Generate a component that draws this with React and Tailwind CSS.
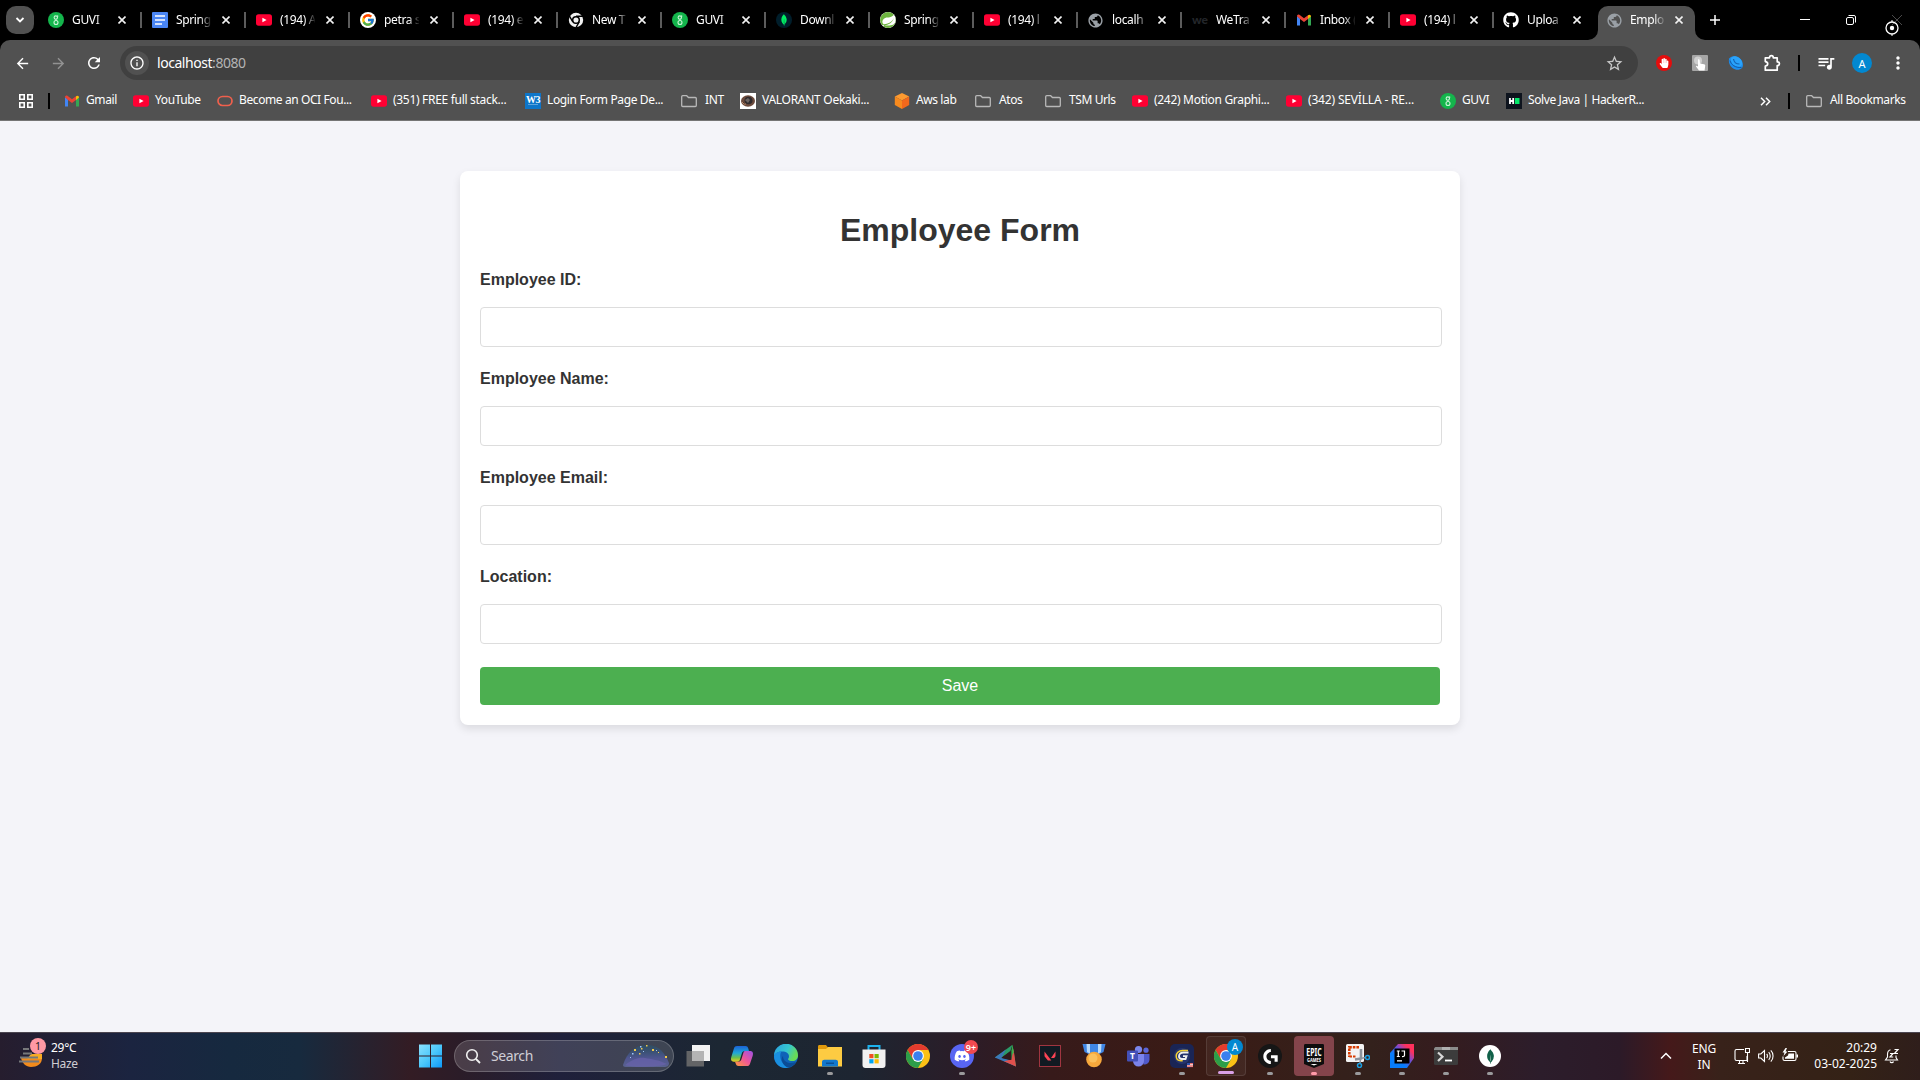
import React from "react";
import {
  MdArrowBack,
  MdArrowForward,
  MdRefresh,
  MdStarBorder,
  MdQueueMusic,
  MdMoreVert,
  MdInfoOutline,
  MdPublic,
} from "react-icons/md";
import { FcGoogle } from "react-icons/fc";
import { FaGithub, FaDiscord, FaHandPaper } from "react-icons/fa";
import { SiMongodb, SiSpring, SiLogitechg } from "react-icons/si";

/* ---------- favicons ---------- */

const Guvi = () => (
  <svg viewBox="0 0 16 16" className="size-4 shrink-0">
    <circle cx="8" cy="8" r="8" fill="#14b54c" />
    <g fill="none" stroke="#c9f5d6" strokeWidth="1.100">
      <circle cx="7.800" cy="5.600" r="1.700" />
      <circle cx="8" cy="10.500" r="2" />
      <path d="M9 4.500l1.200-.8M8 7.300v1.200" />
    </g>
  </svg>
);

const YouTube = () => (
  <svg viewBox="0 0 16 16" className="size-4 shrink-0">
    <rect y="2.300" width="16" height="11.400" rx="2.600" fill="#ff0033" />
    <path d="M6.400 5.700v4.600L10.600 8z" fill="#fff" />
  </svg>
);

const Docs = () => (
  <svg viewBox="0 0 16 16" className="size-4 shrink-0">
    <rect width="16" height="16" rx="1" fill="#4a86f5" />
    <path d="M3 4h10M3 8h10M3 12h7" stroke="#fff" strokeWidth="1.700" />
  </svg>
);

const Gmail = () => (
  <svg viewBox="0 0 16 16" className="size-4 shrink-0">
    <path d="M1 4v9.500h3V6.500z" fill="#4285f4" />
    <path d="M15 4v9.500h-3V6.500z" fill="#34a853" />
    <path d="M1 4.300 4 7l4 3 4-3V3.200L8 6.300 3.400 2.800C2.200 2 1 2.800 1 4.300z" fill="#ea4335" />
    <path d="M12 3.200v3.900l3-2.500c0-1.800-1.500-2.500-3-1.400z" fill="#fbbc04" />
  </svg>
);

const ChromeMono = () => (
  <svg viewBox="0 0 16 16" className="size-4 shrink-0">
    <circle cx="8" cy="8" r="7.200" fill="#f1f1f1" />
    <circle cx="8" cy="8" r="3.300" fill="#f1f1f1" stroke="#000" strokeWidth="1.500" />
    <path d="M8 4.300h7M4.800 9.900 1.300 3.900M11.200 9.900 7.700 16" stroke="#000" strokeWidth="1.400" />
  </svg>
);

const Mongo = () => (
  <span className="flex size-4 shrink-0 items-center justify-center rounded-full bg-[#001e2b]">
    <SiMongodb size={12} color="#00ed64" />
  </span>
);

const Spring = () => <SiSpring size={16} color="#6db33f" className="shrink-0 rounded-full bg-white" />;

const Globe = () => <MdPublic size={17} color="#9aa0a6" className="-ml-px shrink-0" />;

const WeMark = () => (
  <span className="w-4 shrink-0 text-center font-['Lato'] text-[12px] leading-none font-black text-[#23262a]">we</span>
);

const Git = () => <FaGithub size={16} color="#fff" className="-ml-px shrink-0" />;

const GoogleG = () => (
  <span className="flex size-4 shrink-0 items-center justify-center rounded-full bg-white">
    <FcGoogle size={14} />
  </span>
);

const Oracle = () => (
  <svg viewBox="0 0 16 16" className="size-4 shrink-0">
    <rect x="1" y="3.500" width="14" height="9" rx="4.500" fill="none" stroke="#f0604d" strokeWidth="1.700" />
  </svg>
);

const W3 = () => (
  <span className="flex size-4 shrink-0 flex-col items-center bg-[#0e76c9] font-['Liberation_Serif'] text-[10px] leading-[13px] font-bold tracking-[-0.5px] text-white">
    W3
    <span className="-mt-0.5 h-px w-2.5 bg-[#5da4dd]" />
  </span>
);

const Folder = () => (
  <svg viewBox="0 0 16 16" className="mr-0.5 size-4 shrink-0">
    <path d="M1.700 2.700h4l1.800 1.800h6.800c.6 0 1 .4 1 1v7c0 .6-.4 1-1 1H1.700c-.6 0-1-.4-1-1v-8.800c0-.6.4-1 1-1z" fill="none" stroke="#b8b8b8" strokeWidth="1.300" />
  </svg>
);

const Oekaki = () => (
  <svg viewBox="0 0 16 16" className="size-4 shrink-0">
    <path d="M0 0h16v16H0z" fill="#fff" />
    <ellipse cx="8" cy="8" rx="7" ry="5.800" fill="#6b4a3c" />
    <ellipse cx="8.500" cy="7.500" rx="4" ry="3.800" fill="#2f2a2c" />
    <path d="M5 7l3-2 2 2-2 3z" fill="#6d6562" />
    <path d="M2 9l2 2 2 0" stroke="#b98a6a" />
  </svg>
);

const Aws = () => (
  <svg viewBox="0 0 16 16" className="size-4 shrink-0">
    <path d="M8 0l7.200 3.500L8 7.500.8 3.500z" fill="#fd9a30" />
    <path d="M.8 3.500 8 7.500V16L.8 12z" fill="#f78a1e" />
    <path d="M15.200 3.500 8 7.500V16l7.200-4z" fill="#f2681c" />
  </svg>
);

const Hacker = () => (
  <svg viewBox="0 0 16 16" className="size-4 shrink-0">
    <path d="M0 0h16v16H0z" fill="#0e141e" />
    <path d="M4 5v6M7.200 5v6M3.500 8h4" stroke="#fff" strokeWidth="1.800" />
    <path d="M9 5h4.500v6H9z" fill="#05e86a" />
  </svg>
);

/* ---------- tab strip ---------- */

const tabs = [
  [Guvi, "GUVI"],
  [Docs, "Spring"],
  [YouTube, "(194) A"],
  [GoogleG, "petra s"],
  [YouTube, "(194) e"],
  [ChromeMono, "New T"],
  [Guvi, "GUVI"],
  [Mongo, "Downl"],
  [Spring, "Spring"],
  [YouTube, "(194) l"],
  [Globe, "localh"],
  [WeMark, "WeTra"],
  [Gmail, "Inbox ("],
  [YouTube, "(194) l"],
  [Git, "Uploa"],
];

const Cross = () => (
  <svg viewBox="0 0 8 8" className="size-2 shrink-0">
    <path d="M.5.5l7 7M7.500.5l-7 7" stroke="#f2f2f2" strokeWidth="1.600" />
  </svg>
);

const TabBody = ({ Icon, label }) => (
  <>
    <Icon />
    <span className="ml-2 w-[35px] text-[12px] leading-4 tracking-[-0.35px] whitespace-nowrap text-white [mask-image:linear-gradient(to_right,#000_24px,transparent_36px)]">
      {label}
    </span>
    <span className="ml-[11px]">
      <Cross />
    </span>
  </>
);

const TabStrip = () => (
  <div className="flex h-10 items-start bg-black">
    <div className="mt-1.5 ml-1.5 flex size-7 items-center justify-center rounded-[10px] bg-[#515151]">
      <svg viewBox="0 0 10 8" className="h-2 w-2.5">
        <path d="M1.500 2l3.500 3.500L8.500 2" fill="none" stroke="#fff" strokeWidth="1.800" />
      </svg>
    </div>
    <div className="ml-3.5 flex h-10 items-center">
      {tabs.map(([Icon, label], i) => (
        <div key={i} className="flex h-10 w-[104px] items-center">
          <TabBody Icon={Icon} label={label} />
          {i < 14 && <span className="ml-3.5 h-4 w-[1.500px] bg-[#5c5c5c]" />}
        </div>
      ))}
    </div>
    <div className="relative mt-1.5 -ml-2.5 flex h-[34px] w-[97px] items-center rounded-t-[10px] bg-[#515151] pb-1.5 pl-[9px]">
      <svg viewBox="0 0 10 10" className="absolute bottom-0 -left-2.5 size-2.5">
        <path d="M10 0v10H0A10 10 0 0 0 10 0z" fill="#515151" />
      </svg>
      <svg viewBox="0 0 10 10" className="absolute -right-2.5 bottom-0 size-2.5">
        <path d="M0 0v10h10A10 10 0 0 1 0 0z" fill="#515151" />
      </svg>
      <Globe />
      <span className="ml-[7px] w-[35px] text-[12px] leading-4 tracking-[-0.35px] whitespace-nowrap text-white [mask-image:linear-gradient(to_right,#000_24px,transparent_36px)]">
        Emplo
      </span>
      <span className="ml-2.5">
        <Cross />
      </span>
    </div>
    <div className="flex h-10 flex-1 items-center pl-[15px]">
      <svg viewBox="0 0 10 10" className="size-2.5">
        <path d="M5 0v10M0 5h10" stroke="#fff" strokeWidth="1.500" />
      </svg>
      <svg viewBox="0 0 10 10" className="ml-[80px] size-2.5">
        <path d="M0 4.500h10" stroke="#fff" />
      </svg>
      <svg viewBox="0 0 10 10" className="ml-9 size-2.5 overflow-visible">
        <rect x=".5" y="2.500" width="7" height="7" rx="1.500" fill="none" stroke="#fff" />
        <path d="M2.500.5H8A1.500 1.500 0 0 1 9.500 2v5.500" fill="none" stroke="#fff" />
      </svg>
      <div className="relative ml-9 size-2.5">
        <svg viewBox="0 0 10 10" className="size-2.5">
          <path d="M0 0l10 10M10 0L0 10" stroke="#4a4a4a" />
        </svg>
        <svg viewBox="0 0 16 16" className="absolute top-[5px] -left-2 size-4">
          <circle cx="8" cy="8" r="6" fill="none" stroke="#fff" strokeWidth="1.300" />
          <circle cx="8" cy="8" r="2.200" fill="#fff" />
          <path d="M8 0v2M8 14v2" stroke="#fff" />
        </svg>
      </div>
    </div>
  </div>
);

/* ---------- toolbar ---------- */

const Slot = ({ children }) => <div className="flex w-9 shrink-0 items-center justify-center">{children}</div>;

const Toolbar = () => (
  <div className="flex h-[46px] items-center pl-1">
    <Slot>
      <MdArrowBack size={17} color="#fff" />
    </Slot>
    <Slot>
      <MdArrowForward size={17} color="#929292" />
    </Slot>
    <Slot>
      <MdRefresh size={18} color="#fff" />
    </Slot>
    <div className="ml-2 flex h-[34px] w-[1518px] items-center rounded-full bg-[#404040] pr-3.5 pl-[5px]">
      <div className="flex size-6 items-center justify-center rounded-full bg-[#515151]">
        <MdInfoOutline size={16} color="#fff" />
      </div>
      <span className="ml-2 flex-1 pb-px text-[14px] tracking-[-0.45px] text-white">
        localhost<span className="text-[#b4b4b4]">:8080</span>
      </span>
      <MdStarBorder size={19} color="#c6c6c6" />
    </div>
    <div className="ml-2 flex items-center">
      <Slot>
        <span className="flex size-4 items-center justify-center rounded-full bg-[#e40d0d]">
          <FaHandPaper size={10} color="#fff" />
        </span>
      </Slot>
      <Slot>
        <svg viewBox="0 0 16 16" className="size-4">
          <rect width="16" height="16" rx="1" fill="#a6a6a6" />
          <circle cx="6" cy="5.500" r="4" fill="#cfcfcf" />
          <path d="M6 4.500c1-.6 1.600 0 1.700.8L8 8.500l4 .8c1 .2 1.300.8 1.200 1.500l-.6 4.700H7L4 11.500c-.3-.9.6-1.300 2 0z" fill="#fff" />
        </svg>
      </Slot>
      <Slot>
        <svg viewBox="0 0 16 16" className="size-4">
          <path d="M1.200 3.500C3.500.8 8 .5 11.500 3.200c3.500 2.800 4.300 7 2.500 9.800-2.500 2.500-6.500 2.300-9.500 0C1.500 10.500.2 6.500 1.200 3.500z" fill="#1c8ff0" />
          <ellipse cx="8.500" cy="6.500" rx="6.300" ry="4.500" transform="rotate(40 8.500 6.500)" fill="#2aa3fb" />
          <path d="M2 5.500c1 4 5 7.500 11.500 7" fill="none" stroke="#14559c" strokeWidth=".9" />
          <path d="M5.500 4c.5 3 3 5 6 5" fill="none" stroke="#1464b4" strokeWidth="1.200" />
        </svg>
      </Slot>
      <Slot>
        <svg viewBox="0 0 18 18" className="size-[18px]">
          <path
            d="M2.300 3.800h4.200c0-3 3.800-3 3.800 0h3.900v4c3 0 3 3.800 0 3.800v4.600H2.300v-4c3.200-.3 3.200-4.400 0-4.600z"
            fill="none"
            stroke="#fff"
            strokeWidth="1.700"
            strokeLinejoin="round"
          />
        </svg>
      </Slot>
      <span className="ml-2 h-4 w-0.5 bg-black" />
      <span className="ml-2 flex">
        <Slot>
          <MdQueueMusic size={20} color="#fff" />
        </Slot>
        <Slot>
          <span className="flex size-5 items-center justify-center rounded-full bg-[#0288d1] text-[11px] leading-none text-white">A</span>
        </Slot>
        <Slot>
          <MdMoreVert size={20} color="#fff" />
        </Slot>
      </span>
    </div>
  </div>
);

const bookmarks = [
  [Gmail, "Gmail", "w-[69px]"],
  [YouTube, "YouTube", "w-[84px]"],
  [Oracle, "Become an OCI Fou...", "w-[154px]"],
  [YouTube, "(351) FREE full stack...", "w-[154px] tracking-[-0.3px]"],
  [W3, "Login Form Page De...", "w-[156px] tracking-[-0.36px]"],
  [Folder, "INT", "w-[59px]"],
  [Oekaki, "VALORANT Oekaki...", "w-[154px] tracking-[-0.28px]"],
  [Aws, "Aws lab", "w-[81px]"],
  [Folder, "Atos", "w-[70px]"],
  [Folder, "TSM Urls", "w-[87px]"],
  [YouTube, "(242) Motion Graphi...", "w-[154px] tracking-[-0.3px]"],
  [YouTube, "(342) SEVİLLA - RE...", "w-[154px] tracking-[-0.17px]"],
  [Guvi, "GUVI", "w-[66px]"],
  [Hacker, "Solve Java | HackerR...", "w-[160px]"],
];

const Bookmarks = () => (
  <div className="flex h-[34px] items-center pb-1 pl-[19px] text-[12px] tracking-[-0.4px] whitespace-nowrap text-white">
    <svg viewBox="0 0 14 14" className="size-3.5">
      <path d="M.8.8h4.400v4.400H.8zM8.800.8h4.400v4.400H8.800zM.8 8.800h4.400v4.400H.8zM8.800 8.800h4.400v4.400H8.800z" fill="none" stroke="#fff" strokeWidth="1.600" />
    </svg>
    <span className="ml-[15px] h-4 w-0.5 bg-black" />
    <div className="ml-3.5 flex">
      {bookmarks.map(([Icon, label, w]) => (
        <div key={label} className={"flex items-center gap-1.5 " + w}>
          <Icon />
          <span className="pb-0.5">{label}</span>
        </div>
      ))}
    </div>
    <svg viewBox="0 0 11 9" className="ml-[94px] h-[9px] w-[11px]">
      <path d="M1 .8l3.700 3.700L1 8.200M6 .8l3.700 3.700L6 8.200" fill="none" stroke="#fff" strokeWidth="1.500" />
    </svg>
    <span className="ml-[17px] h-4 w-0.5 bg-black" />
    <div className="ml-4 flex items-center gap-1.5">
      <Folder />
      <span className="pb-0.5">All Bookmarks</span>
    </div>
  </div>
);

/* ---------- page ---------- */

const fields = ["Employee ID:", "Employee Name:", "Employee Email:", "Location:"];

const Page = () => (
  <main className="flex-1 bg-[#f4f4f9] pt-[50px] font-['Liberation_Sans',sans-serif] text-[#333]">
    <form className="mx-auto h-[554px] w-[1000px] rounded-lg bg-white px-5 pt-[41px] shadow-[0_4px_8px_rgba(0,0,0,0.1)]">
      <h1 className="mb-[22px] text-center text-[32px] leading-[37px] font-bold">Employee Form</h1>
      {fields.map((f) => (
        <div key={f} className="h-[99px]">
          <label className="block text-[16px] leading-[18px] font-bold">{f}</label>
          <input type="text" className="mt-[18px] block h-10 w-[962px] rounded border border-[#ddd] bg-white" />
        </div>
      ))}
      <button type="button" className="block h-[38px] w-full rounded bg-[#4caf50] text-[16px] text-white">
        Save
      </button>
    </form>
  </main>
);

/* ---------- taskbar ---------- */

const ChromeColor = () => (
  <svg viewBox="0 0 24 24" className="size-6">
    <circle cx="12" cy="12" r="12" fill="#fbc116" />
    <path d="M1.600 6 6.800 15 12 12V6h10.400A12 12 0 0 0 1.600 6z" fill="#e33b2e" />
    <path d="M1.600 6 6.800 15 17.200 15 12 24A12 12 0 0 1 1.600 6z" fill="#2d9e49" />
    <circle cx="12" cy="12" r="5.900" fill="#fff" />
    <circle cx="12" cy="12" r="4.800" fill="#3a80ee" />
  </svg>
);

const Start = () => (
  <svg viewBox="0 0 24 24" className="size-6">
    <defs>
      <linearGradient id="win" x1="0" y1="0" x2="1" y2="1">
        <stop offset="0" stopColor="#8be0fd" />
        <stop offset=".5" stopColor="#4cc8fb" />
        <stop offset="1" stopColor="#0d98f8" />
      </linearGradient>
    </defs>
    <path d="M1 .5h11v11H1zM13 .5h11v11H13zM1 12.500h11v11H1zM13 12.500h11v11H13z" fill="url(#win)" />
  </svg>
);

const TaskView = () => (
  <svg viewBox="0 0 24 24" className="size-6">
    <path d="M6 1h18v16H6z" fill="#f2f2f2" />
    <path d="M.5 7H18v15.500H.5z" fill="#6c6c6c" fillOpacity=".9" />
    <path d="M6 7h12v10H6z" fill="#b4b4b4" />
  </svg>
);

const Copilot = () => (
  <svg viewBox="0 0 24 24" className="size-6">
    <defs>
      <linearGradient id="cpa" x1="0" y1="0" x2="0" y2="1">
        <stop offset="0" stopColor="#1b62d6" />
        <stop offset=".45" stopColor="#1fa8d8" />
        <stop offset=".75" stopColor="#6cc04a" />
        <stop offset="1" stopColor="#f0d020" />
      </linearGradient>
      <linearGradient id="cpb" x1="1" y1="0" x2="0" y2="1">
        <stop offset="0" stopColor="#9b52e8" />
        <stop offset=".5" stopColor="#ee5599" />
        <stop offset="1" stopColor="#ff9c3a" />
      </linearGradient>
    </defs>
    <path d="M7 2h8.500c1.500 0 2.200.8 2.700 2.200L19 7h-4c-2 0-2.800 1-3.300 2.700L9.800 16c-.4 1.300-1 1.700-2.300 1.700H4C1 17.700.6 15.500 1.300 13L4 4.300C4.500 2.800 5.400 2 7 2z" fill="url(#cpa)" />
    <path d="M17 22H8.500C7 22 6.300 21.200 5.800 19.800L5 17.700h3c2 0 3-1 3.500-2.700L13.400 8.700C13.800 7.400 14.500 7 15.800 7H20c3 0 3.400 2.200 2.700 4.700L20 19.700C19.500 21.200 18.600 22 17 22z" fill="url(#cpb)" />
  </svg>
);

const Edge = () => (
  <svg viewBox="0 0 24 24" className="size-6">
    <defs>
      <linearGradient id="eg" x1="0" y1="0" x2="1" y2=".4">
        <stop offset="0" stopColor="#2a9fe0" />
        <stop offset=".6" stopColor="#35c7d0" />
        <stop offset="1" stopColor="#68dd56" />
      </linearGradient>
    </defs>
    <circle cx="12" cy="12" r="12" fill="#0f63b8" />
    <path d="M0 12A12 12 0 0 1 24 11.500c0 3.500-2.500 5.500-5.500 5.500-3 0-4.500-1-4.500-1.800 0-.6 1-1 1-2.900C15 9.500 12 7.500 8.500 7.500 4 7.500 1 9.500 0 12z" fill="url(#eg)" />
    <path d="M0 12c.8-3 4-4.500 7.500-4.500C6 9 5.500 14 8 18c1.500 2.500 4 4.500 7 5.500C6 26 0 19 0 12z" fill="#1a8fe0" />
    <path d="M9 12c0 5 5 9 13 6-1 2-4 5-8 5.500C9 22 6 15 9 12z" fill="#0b4c95" />
  </svg>
);

const Explorer = () => (
  <svg viewBox="0 0 24 24" className="size-6">
    <path d="M0 2.500C0 1.500.6 1 1.500 1H8l2 2.500V8H0z" fill="#e09a0c" />
    <path d="M0 5h8l2-2h14v19.500H0z" fill="#fdcb42" />
    <path d="M4 22.500V18c0-1.500 1-2.300 2.300-2.300h11.400c1.300 0 2.300.8 2.300 2.300v4.500z" fill="#1278cc" />
    <path d="M8 18.500h8v1.500H8z" fill="#0a4f94" />
  </svg>
);

const Store = () => (
  <svg viewBox="0 0 24 24" className="size-6">
    <path d="M6.500 6V2h11v4" fill="none" stroke="#1cb2ee" strokeWidth="2" />
    <path d="M.5 5.500h23V21c0 1.800-1 3-3 3h-17c-2 0-3-1.200-3-3z" fill="#f1f1f1" />
    <path d="M7.300 10h4.200v4.200H7.300z" fill="#f25022" />
    <path d="M12.500 10h4.200v4.200h-4.200z" fill="#7fba00" />
    <path d="M7.300 15.200h4.200v4.200H7.300z" fill="#00a4ef" />
    <path d="M12.500 15.200h4.200v4.200h-4.200z" fill="#ffb900" />
  </svg>
);

const Discord = () => (
  <div className="relative flex size-6 items-center justify-center rounded-full bg-[#5865f2]">
    <FaDiscord size={16} color="#fff" />
    <span className="absolute -top-1 -right-1 flex size-3.5 items-center justify-center rounded-full bg-[#f04a50] text-[9px] leading-none font-semibold text-white">
      9+
    </span>
  </div>
);

const Triangle = () => (
  <svg viewBox="0 0 24 24" className="size-6">
    <path d="M.8 13.500 18.500.8 16 8 7 14z" fill="#2a9a68" />
    <path d="M.8 13.500 12 5.500 7.500 14l10 2.500L22 22.500z" fill="#3b78b8" />
    <path d="M18.500.8 22 22.500l-4.500-6.500V6.500z" fill="#2fae4e" />
    <path d="M10 17.300 17.500 15.500 19.500 5 22 22.500z" fill="#e0504c" />
    <path d="M18.500.8l1.300 8-2 2V6.500z" fill="#35b24c" />
    <path d="M7.500 13.700 16.300 7l1 9z" fill="#2e1a1d" />
  </svg>
);

const Valorant = () => (
  <div className="flex size-[22px] items-center justify-center border border-[#a03540] bg-[#111a22]">
    <svg viewBox="0 0 12 10" className="h-2.5 w-3">
      <path d="M.5.5v4.700l3.400 4.300h3.400zM11.500.5v4.700l-1.300 1.700H7z" fill="#fa4454" />
    </svg>
  </div>
);

const Medal = () => (
  <svg viewBox="0 0 24 24" className="size-6">
    <path d="M.5 0h23l-2 8-5 2.500h-9l-5-2.500z" fill="#3f86e6" />
    <path d="M4.500 0H8v9.500L5 8.300zM16 0h3.500L19 8.300 16 9.500z" fill="#b8dafb" />
    <circle cx="12" cy="15.500" r="7.800" fill="#f7a83c" />
    <circle cx="11" cy="14" r="4.500" fill="#fcc05c" />
  </svg>
);

const Teams = () => (
  <svg viewBox="0 0 24 24" className="size-6">
    <circle cx="20" cy="6.200" r="2.600" fill="#5b66d8" />
    <circle cx="12.500" cy="5.500" r="3.600" fill="#7b86ec" />
    <path d="M15 10h8.500v6a5 5 0 0 1-6 4.500z" fill="#5059c9" />
    <path d="M7 10h11v7a5.500 5.500 0 0 1-11 0z" fill="#7b83eb" />
    <rect x="1" y="6.500" width="11" height="11" rx="1" fill="#4450b8" />
    <text x="6.500" y="15" textAnchor="middle" fontSize="8.500" fontWeight="700" fill="#fff">T</text>
  </svg>
);

const GHub = () => (
  <svg viewBox="0 0 24 24" className="size-6">
    <rect width="24" height="24" rx="5" fill="#1a2555" />
    <circle cx="12" cy="12" r="8" fill="#2d3f7d" opacity=".6" />
    <path d="M18.500 8.500h-5c-3 0-4.500 2-4.500 3.800 0 1.600 1 2.700 2.800 2.700h3.700l1-2.900H13" fill="none" stroke="#f0f0f0" strokeWidth="1.900" />
    <path d="M18 6.500H12.500c-4 0-6.300 3-6.300 5.600 0 2.800 1.800 4.700 4.500 4.700h2" fill="none" stroke="#f3d032" strokeWidth="1.500" />
    <path d="M17 19h6v4h-6z" fill="#f3f3f3" />
    <path d="M20 19.500h3M17 21.200h6M17 22.700h6" stroke="#e04848" strokeWidth=".8" />
    <path d="M17 19h3v2h-3z" fill="#2d4fa8" />
  </svg>
);

const ChromeProfile = () => (
  <div className="relative size-6">
    <ChromeColor />
    <span className="absolute -top-[5px] -right-[5px] flex size-4 items-center justify-center rounded-full bg-[#0288d1] text-[10px] leading-none text-white">
      A
    </span>
  </div>
);

const Logi = () => (
  <div className="flex size-6 items-center justify-center rounded-full bg-[#161616]">
    <SiLogitechg size={15} color="#fff" />
  </div>
);

const Epic = () => (
  <svg viewBox="0 0 24 24" className="size-6">
    <path d="M3.500 0h17C21.500 0 22 .5 22 1.500V20l-10 4L2 20V1.500C2 .5 2.500 0 3.500 0z" fill="#0d0d0d" />
    <text x="12" y="12" textAnchor="middle" fontSize="11" fontWeight="700" textLength="15.500" lengthAdjust="spacingAndGlyphs" fill="#fff">EPIC</text>
    <text x="12" y="17.500" textAnchor="middle" fontSize="4.300" fontWeight="700" textLength="14" lengthAdjust="spacingAndGlyphs" fill="#fff">GAMES</text>
    <path d="M8.500 20h7L12 21.500z" fill="#fff" />
  </svg>
);

const Snip = () => (
  <svg viewBox="0 0 24 24" className="size-6">
    <rect y="0" width="18" height="18" rx="1.500" fill="#f3f3f3" />
    <path d="M13 3.300H3.300V13" fill="none" stroke="#d83b01" strokeWidth="2.600" strokeDasharray="2.600 1" />
    <path d="M3.500 12.500h7" stroke="#d83b01" strokeWidth="2.200" strokeDasharray="2.500 1" />
    <path d="M15 5v9.500L9 15.500" fill="none" stroke="#8d949c" strokeWidth="2.600" />
    <path d="M14.500 14.500l5-1M14.500 14.500l-.5 5" stroke="#8d949c" strokeWidth="1.600" />
    <circle cx="21.500" cy="13.500" r="2" fill="none" stroke="#1ba0e2" strokeWidth="1.500" />
    <circle cx="13.500" cy="21.500" r="2" fill="none" stroke="#1ba0e2" strokeWidth="1.500" />
  </svg>
);

const Idea = () => (
  <svg viewBox="0 0 24 24" className="size-6">
    <defs>
      <linearGradient id="ij" x1="0" y1="1" x2="1" y2="0">
        <stop offset=".35" stopColor="#087cfa" />
        <stop offset=".6" stopColor="#7a4bd0" />
        <stop offset=".8" stopColor="#fe315d" />
      </linearGradient>
    </defs>
    <path d="M8 0h16v14l-7 10H0V9z" fill="url(#ij)" />
    <path d="M4.500 4.500h15v15h-15z" fill="#000" />
    <path d="M6.800 7h3M8.300 7v5.500M6.800 12.500h3M11.500 7h3v4.200c0 1-1 1.500-2.500 1.300M7 16.800h5" fill="none" stroke="#fff" strokeWidth="1.200" />
  </svg>
);

const Terminal = () => (
  <svg viewBox="0 0 24 24" className="size-6">
    <rect y="3" width="24" height="18" rx="1.500" fill="#3c3c3c" />
    <path d="M1.500 3H24v3H0V4.500z" fill="#8b8b8b" />
    <path d="M8 3h8v3H8z" fill="#b0b0b0" />
    <path d="M4 8.500l4.500 4.200L4 17" fill="none" stroke="#d8d8d8" strokeWidth="2.200" />
    <path d="M11 16.500h7" stroke="#fff" strokeWidth="1.800" />
  </svg>
);

const Compass = () => (
  <div className="flex size-[22px] items-center justify-center rounded-full bg-white">
    <SiMongodb size={15} color="#116149" />
  </div>
);

// Each entry: icon, indicator style, tile background.
const apps = [
  [TaskView],
  [Copilot],
  [Edge],
  [Explorer, "w-1.5 bg-[#9a9a9c]"],
  [Store],
  [ChromeColor],
  [Discord, "w-1.5 bg-[#9a9a9c]"],
  [Triangle],
  [Valorant],
  [Medal],
  [Teams],
  [GHub, "w-1.5 bg-[#9a9a9c]"],
  [ChromeProfile, "w-4 bg-[#d9a0e6]", "border border-white/10 bg-white/5"],
  [Logi, "w-1.5 bg-[#9a9a9c]"],
  [Epic, "w-1.5 bg-[#ff9aa8]", "bg-[#84444b]"],
  [Snip, "w-1.5 bg-[#9a9a9c]"],
  [Idea, "w-1.5 bg-[#9a9a9c]"],
  [Terminal, "w-1.5 bg-[#9a9a9c]"],
  [Compass, "w-1.5 bg-[#9a9a9c]"],
];

const Tile = ({ Icon, bar, bg }) => (
  <div className="flex w-11 justify-center">
    <div className={"relative flex size-10 items-center justify-center rounded " + (bg || "")}>
      <Icon />
      {bar && <span className={"absolute bottom-px h-[3px] rounded-full " + bar} />}
    </div>
  </div>
);

const Weather = () => (
  <div className="flex items-center pl-[19px]">
    <div className="relative h-7 w-[26px]">
      <svg viewBox="0 0 26 28" className="-mt-px h-7 w-[26px]">
        <path d="M2 17h21c0 6-5 9-11 9-5 0-9-4-10-9z" fill="#f38b1c" />
        <path d="M12 13h11v5H8z" fill="#f8ab22" />
        <path d="M4 8h6M4 12.500h9M1 16.500h18M0 20.500h20" stroke="#77787a" strokeWidth="1.800" />
      </svg>
      <span className="absolute -top-1 -right-px flex size-4 items-center justify-center rounded-full bg-[#ff99a4] text-[10.500px] leading-none text-[#222]">
        1
      </span>
    </div>
    <div className="ml-1.5 text-[12px] leading-4 tracking-[-0.3px]">
      <div className="text-white">29°C</div>
      <div className="text-[#cfcdd2]">Haze</div>
    </div>
  </div>
);

const SearchArt = () => (
  <svg viewBox="0 0 46 24" className="h-6 w-[46px]">
    <defs>
      <linearGradient id="hill" x1="0" y1="0" x2="0" y2="1">
        <stop offset="0" stopColor="#23576f" stopOpacity=".5" />
        <stop offset=".6" stopColor="#4f5590" />
        <stop offset="1" stopColor="#5a6390" />
      </linearGradient>
    </defs>
    <path d="M0 21C4 8 12 1 24 1s18 8 22 18c0 3-2 4-5 4H5c-3 0-5 0-5-2z" fill="url(#hill)" />
    <path d="M2 21c8-6 14-8 20-7s14 2 22 6c-6 3-36 4-42 1z" fill="#6a62ac" opacity=".7" />
    <path d="M11 5h2v2h-2zM18 4h1.500v1.500H18zM23 1h1.500v1.500H23zM29 5h2v2h-2zM16 9h1.500v1.500H16zM42 12h2v2h-2zM35 8h1v1h-1z" fill="#f0c84a" />
    <path d="M17 2h1.500v1.500H17zM9 9h1.500v1.500H9zM20 7h1v1h-1zM33 6h1v1h-1zM7 13h1v1H7z" fill="#9fc6f5" />
  </svg>
);

const Taskbar = () => (
  <footer className="flex h-12 items-stretch border-t border-[#4b4550] bg-[linear-gradient(90deg,#261d2e_0px,#1b2440_130px,#16293f_230px,#172a3e_300px,#331c24_410px,#2b1c28_460px,#1f203b_560px,#1c2733_720px,#1d2531_860px,#2c1c27_970px,#371a1a_1050px,#3a1b15_1200px,#33211c_1370px,#351c1e_1440px,#2c1d2b_1540px,#2c1a28_1620px,#45191a_1670px,#38221a_1720px,#342216_1850px,#2f1e1b_1920px)] pb-px">
    <div className="w-[408px]">
      <div className="flex h-full items-center">
        <Weather />
      </div>
    </div>
    <div className="flex items-center">
      <Tile Icon={Start} />
      <div className="mx-0.5 flex h-8 w-[220px] items-center rounded-full border border-white/20 bg-white/15 pr-1 pl-2.5">
        <svg viewBox="0 0 16 16" className="size-4">
          <circle cx="7" cy="7" r="5.300" fill="none" stroke="#f0f0f0" strokeWidth="1.600" />
          <path d="M11 11l4 4" stroke="#f0f0f0" strokeWidth="1.800" />
        </svg>
        <span className="ml-2.5 flex-1 pb-px text-[14px] tracking-[-0.4px] text-[#cfced6]">Search</span>
        <SearchArt />
      </div>
      {apps.map(([Icon, bar, bg], i) => (
        <Tile key={i} Icon={Icon} bar={bar} bg={bg} />
      ))}
    </div>
    <div className="flex flex-1 items-center justify-end pr-5 text-[12px] leading-4 tracking-[-0.2px] text-white">
      <svg viewBox="0 0 12 8" className="h-2 w-3">
        <path d="M1 6.500l5-5 5 5" fill="none" stroke="#fff" strokeWidth="1.500" />
      </svg>
      <div className="ml-[19px] w-[26px] pt-px text-center">
        <div>ENG</div>
        <div>IN</div>
      </div>
      <svg viewBox="0 0 16 16" className="ml-[17px] size-4">
        <path d="M10 1.500H2.500c-1 0-1.500.5-1.500 1.500v8c0 1 .5 1.500 1.500 1.500H13V8M4 15.500h7M5.500 13v2M9 13v2M11.500.5h4v4h-4zM13.500 5v9" fill="none" stroke="#fff" strokeWidth="1.100" />
      </svg>
      <svg viewBox="0 0 16 16" className="ml-2 size-4">
        <path d="M.6 6h2.200L6.500 2.500v11L2.800 10H.6z" fill="none" stroke="#fff" strokeWidth="1.100" />
        <path d="M8.700 6c1 1 1 3 0 4M10.700 4.200c2 2 2 5.600 0 7.600M12.800 2.300c3 3 3 8.400 0 11.400" fill="none" stroke="#fff" strokeWidth="1.100" />
      </svg>
      <svg viewBox="0 0 16 16" className="ml-2 size-4">
        <path d="M6 3.500h6.500c1 0 1.500.5 1.500 1.500v6c0 1-.5 1.500-1.500 1.500h-10c-1 0-1.500-.5-1.500-1.500V8.500" fill="none" stroke="#fff" strokeWidth="1.100" />
        <path d="M6.500 5.500H12v5.200H3V9.500l3-2zM14.500 6.500H16v3h-1.500zM3.500 0 .5 4.500h2L1.500 8 5.500 3.500h-2L5 0z" fill="#fff" />
      </svg>
      <div className="ml-[15px] w-16 text-right tracking-normal whitespace-nowrap">
        <div>20:29</div>
        <div>03-02-2025</div>
      </div>
      <svg viewBox="0 0 16 16" className="ml-[7px] size-4">
        <path d="M6.500 1.800C4.500 2.300 3.500 4.300 3.500 6.500V9L1.500 12h12L12 9.500V7.500M6 13.500c.5 1.500 3 1.500 3.500 0" fill="none" stroke="#fff" strokeWidth="1.100" />
        <path d="M6 5.500h3L6 9h3.200M10.500 1.500H14l-3.500 4H14" fill="none" stroke="#fff" strokeWidth="1.200" />
      </svg>
    </div>
  </footer>
);

export default function App() {
  return (
    <div className="flex h-[1080px] w-[1920px] flex-col overflow-hidden font-['Noto_Sans',sans-serif]">
      <header className="bg-black">
        <TabStrip />
        <div className="flex h-[81px] flex-col rounded-t-[10px] border-b border-[#757575] bg-[#515151]">
          <Toolbar />
          <Bookmarks />
        </div>
      </header>
      <Page />
      <Taskbar />
    </div>
  );
}
